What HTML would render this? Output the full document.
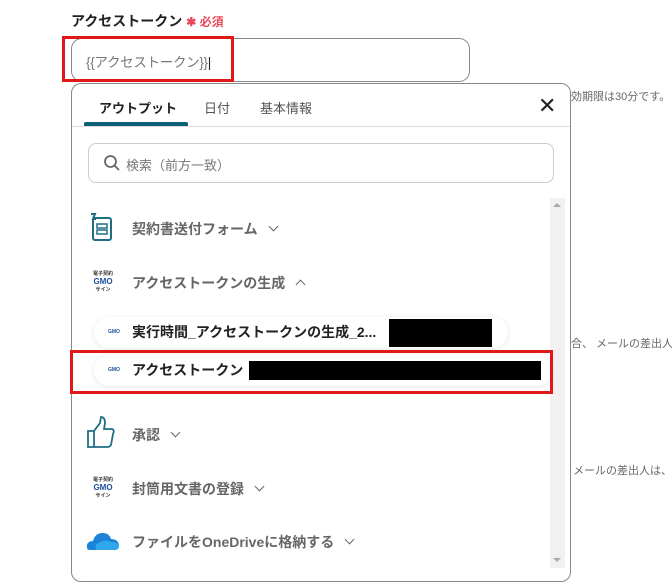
<!DOCTYPE html>
<html><head><meta charset="utf-8"><style>
*{box-sizing:border-box;margin:0;padding:0}
body{width:672px;height:584px;background:#fff;position:relative;overflow:hidden;font-family:"Liberation Sans","Noto Sans CJK JP",sans-serif;color:#333}
.a{position:absolute}
.lbl{left:71px;top:11px;font-size:14px;font-weight:bold;color:#222}
.lbl span{color:#e8485a;font-size:12px}
.inp{left:71px;top:38px;width:399px;height:44px;border:1px solid #888;border-radius:11px;font-size:13.5px;color:#777;padding:12px 0 0 14px;letter-spacing:-0.3px}
.red{border:3px solid #e01818}
.side{font-size:11px;color:#666;white-space:nowrap}
.panel{left:71px;top:83px;width:500px;height:499px;border:1px solid #888;border-radius:10px;background:#fff}
.tab{font-size:13px;top:98px;color:#555}
.row{font-size:14px;color:#666;font-weight:bold}
.chev{display:inline-block;width:7px;height:7px;border-right:1.6px solid #666;border-bottom:1.6px solid #666;transform:rotate(45deg);margin-left:12px;position:relative;top:-4px}
.up{transform:rotate(-135deg);top:0}
.pill{background:#fff;border-radius:16px;box-shadow:0 1px 6px rgba(0,0,0,.1);font-size:14px;font-weight:bold;color:#222;padding-left:38px;line-height:31px}
.gmo{font-size:8px;font-weight:bold;color:#1a4f9c;text-align:center;line-height:8px}
</style></head><body>
<div class="a lbl">アクセストークン <span>✱ 必須</span></div>
<div class="a inp">{{アクセストークン}}<span style="color:#222">|</span></div>
<div class="a red" style="left:62px;top:36px;width:172px;height:46px"></div>
<div class="a side" style="left:571px;top:88px">効期限は30分です。</div>
<div class="a side" style="left:571px;top:335px">合、 メールの差出人</div>
<div class="a side" style="left:573px;top:462px">メールの差出人は、</div>
<div class="a panel"></div>
<div class="a tab" style="left:99px;font-weight:bold;color:#222">アウトプット</div>
<div class="a tab" style="left:204px">日付</div>
<div class="a tab" style="left:260px">基本情報</div>
<div class="a" style="left:72px;top:126px;width:498px;height:1px;background:#ddd"></div>
<div class="a" style="left:84px;top:122px;width:104px;height:4px;background:#0d5f78;border-radius:2px 2px 0 0"></div>
<div class="a" style="left:538px;top:95px;font-size:22px;color:#222;line-height:22px">✕</div>
<div class="a" style="left:88px;top:143px;width:466px;height:40px;border:1px solid #ccc;border-radius:8px"></div>
<svg class="a" style="left:103px;top:154px" width="18" height="18" viewBox="0 0 18 18"><circle cx="7.5" cy="7.5" r="5.5" fill="none" stroke="#666" stroke-width="1.8"/><path d="M11.5 11.5L16 16" stroke="#666" stroke-width="1.8"/></svg>
<div class="a" style="left:126px;top:155px;font-size:13px;color:#777">検索（前方一致）</div>
<div class="a" style="left:550px;top:198px;width:15px;height:370px;background:#f1f1f1"></div>
<div class="a" style="left:553px;top:203px;border:4px solid transparent;border-bottom-color:#aaa;border-top:0"></div>
<div class="a" style="left:553px;top:558px;border:4px solid transparent;border-top-color:#aaa;border-bottom:0"></div>
<svg class="a" style="left:88px;top:212px" width="26" height="30" viewBox="0 0 26 30"><rect x="5" y="6" width="18" height="22" rx="2" fill="none" stroke="#1e6f86" stroke-width="2"/><rect x="9" y="12" width="10" height="4" fill="none" stroke="#1e6f86" stroke-width="1.5"/><rect x="9" y="18" width="10" height="4" fill="none" stroke="#1e6f86" stroke-width="1.5"/><path d="M3 2L7 2L5 7L8 7" stroke="#1e6f86" stroke-width="2" fill="none"/></svg>
<div class="a row" style="left:132px;top:219px">契約書送付フォーム<span class="chev"></span></div>
<div class="a gmo" style="left:88px;top:270px;width:30px"><div style="font-size:5px;color:#333">電子契約</div>GMO<div style="font-size:5px;color:#333">サイン</div></div>
<div class="a row" style="left:132px;top:273px">アクセストークンの生成<span class="chev up"></span></div>
<div class="a pill" style="left:94px;top:317px;width:414px">実行時間_アクセストークンの生成_2...</div>
<div class="a gmo" style="left:108px;top:328px;font-size:5px">GMO</div>
<div class="a" style="left:389px;top:319px;width:103px;height:28px;background:#000"></div>
<div class="a pill" style="left:94px;top:355px;width:458px">アクセストークン</div>
<div class="a gmo" style="left:108px;top:366px;font-size:5px">GMO</div>
<div class="a" style="left:249px;top:361px;width:292px;height:19px;background:#000"></div>
<div class="a red" style="left:70px;top:350px;width:483px;height:44px"></div>
<svg class="a" style="left:86px;top:415px" width="30" height="34" viewBox="0 0 30 34"><path d="M2 16H8V32H2Z M8 16L14 8L15 2Q19 2 19 8L18 14H26Q29 15 27 19L25 30Q24 32 21 32H8" fill="none" stroke="#1e6f86" stroke-width="1.8"/></svg>
<div class="a row" style="left:132px;top:425px">承認<span class="chev"></span></div>
<div class="a gmo" style="left:88px;top:476px;width:30px"><div style="font-size:5px;color:#333">電子契約</div>GMO<div style="font-size:5px;color:#333">サイン</div></div>
<div class="a row" style="left:132px;top:479px">封筒用文書の登録<span class="chev"></span></div>
<svg class="a" style="left:86px;top:530px" width="34" height="22" viewBox="0 0 34 22"><path d="M4 20Q0 20 1 15Q2 11 7 11Q9 3 17 3Q23 3 25 9Q32 9 33 15Q33 20 28 20Z" fill="#1b84d8"/><path d="M10 20Q8 13 15 12Q20 9 25 12Q32 12 33 16Q33 20 28 20Z" fill="#2ea8ea"/></svg>
<div class="a row" style="left:132px;top:532px">ファイルをOneDriveに格納する<span class="chev"></span></div>
</body></html>
